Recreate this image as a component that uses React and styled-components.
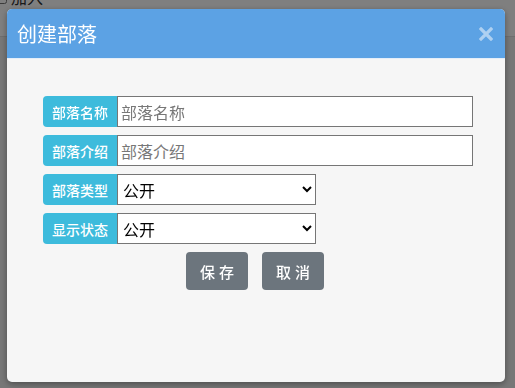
import React from 'react'
import styled, { createGlobalStyle } from 'styled-components'

const Global = createGlobalStyle`
  html, body {
    margin: 0;
    padding: 0;
    height: 100%;
    overflow: hidden;
    font-family: "Noto Sans CJK SC", "Noto Sans", sans-serif;
  }
`

const Page = styled.div`
  height: 388px;
  background: #eeeeee;
`

const TopBar = styled.div`
  height: 37px;
  background: #ffffff;
  border-bottom: 1px solid #dddddd;
  box-sizing: border-box;
  overflow: hidden;
`

const TopRow = styled.label`
  display: flex;
  align-items: center;
  gap: 4px;
  margin: -15px 0 0 -6px;
  font-size: 16px;
  color: #333;
`

const Check = styled.input`
  margin: 0;
  width: 13px;
  height: 13px;
`

const Overlay = styled.div`
  position: fixed;
  inset: 0;
  background: rgba(0, 0, 0, 0.5);
`

const Modal = styled.div`
  position: fixed;
  left: 7px;
  top: 9px;
  width: 498px;
  height: 373px;
  background: #f6f6f6;
  border-radius: 5px;
  overflow: hidden;
  box-shadow: 0 2px 6px rgba(0, 0, 0, 0.35);
  display: flex;
  flex-direction: column;
`

const Header = styled.div`
  height: 49px;
  background: #5ca2e4;
  border-bottom: 1px solid #e4eef9;
  display: flex;
  align-items: center;
  justify-content: space-between;
  padding: 0 10px;
`

const Title = styled.h4`
  margin: 0;
  font-size: 20px;
  font-weight: 400;
  color: #ffffff;
`

const Close = styled.button`
  border: 0;
  background: none;
  padding: 0;
  width: 18px;
  height: 18px;
  display: flex;
  align-items: center;
  justify-content: center;
  opacity: 0.5;
  cursor: pointer;
`

const Form = styled.form`
  display: flex;
  flex-direction: column;
  gap: 8px;
  padding: 37px 0 0 36px;
`

const Row = styled.div`
  display: flex;
  height: 31px;
  width: ${p => p.$w}px;
`

const Label = styled.span`
  width: 74px;
  flex: none;
  display: flex;
  align-items: center;
  justify-content: center;
  background: #3dbbdc;
  color: #ffffff;
  font-size: 14px;
  font-weight: 500;
  border-radius: 4px 0 0 4px;
`

const Input = styled.input`
  flex: 1;
  min-width: 0;
  box-sizing: border-box;
  height: 31px;
  margin: 0;
  padding: 0 3px;
  border: 1px solid #767676;
  background: #fff;
  font-family: inherit;
  font-size: 16px;
  color: #222;
  outline: none;
  &::placeholder {
    color: #777;
  }
`

const Select = styled.select`
  flex: 1;
  min-width: 0;
  box-sizing: border-box;
  height: 31px;
  margin: 0;
  padding: 0 0 0 1px;
  border: 1px solid #767676;
  border-radius: 0;
  background: #fff;
  font-family: inherit;
  font-size: 16px;
  color: #000;
`

const Buttons = styled.div`
  display: flex;
  justify-content: center;
  gap: 14px;
  margin: 0 2px 0 -36px;
`

const Button = styled.button`
  width: 62px;
  height: 38px;
  border: 0;
  border-radius: 4px;
  background: #6c757d;
  color: #fff;
  font-family: inherit;
  font-size: 15px;
  font-weight: 500;
  letter-spacing: 4px;
  padding: 0 0 0 4px;
  cursor: pointer;
`

const App = () => {
  return (
    <>
      <Global />
      <Page>
        <TopBar>
          <TopRow>
            <Check type="checkbox" />
            加入
          </TopRow>
        </TopBar>
      </Page>
      <Overlay />
      <Modal>
        <Header>
          <Title>创建部落</Title>
          <Close type="button" aria-label="close">
            <svg width="14" height="14" viewBox="0 0 14 14">
              <path d="M2 2 L12 12 M12 2 L2 12" stroke="#ffffff" strokeWidth="3.2" strokeLinecap="square" />
            </svg>
          </Close>
        </Header>
        <Form onSubmit={e => e.preventDefault()}>
          <Row $w={430}>
            <Label>部落名称</Label>
            <Input placeholder="部落名称" />
          </Row>
          <Row $w={430}>
            <Label>部落介绍</Label>
            <Input placeholder="部落介绍" />
          </Row>
          <Row $w={273}>
            <Label>部落类型</Label>
            <Select defaultValue="public">
              <option value="public">公开</option>
              <option value="private">私密</option>
            </Select>
          </Row>
          <Row $w={273}>
            <Label>显示状态</Label>
            <Select defaultValue="public">
              <option value="public">公开</option>
              <option value="hidden">隐藏</option>
            </Select>
          </Row>
          <Buttons>
            <Button type="submit">保存</Button>
            <Button type="button">取消</Button>
          </Buttons>
        </Form>
      </Modal>
    </>
  )
}

export default App
